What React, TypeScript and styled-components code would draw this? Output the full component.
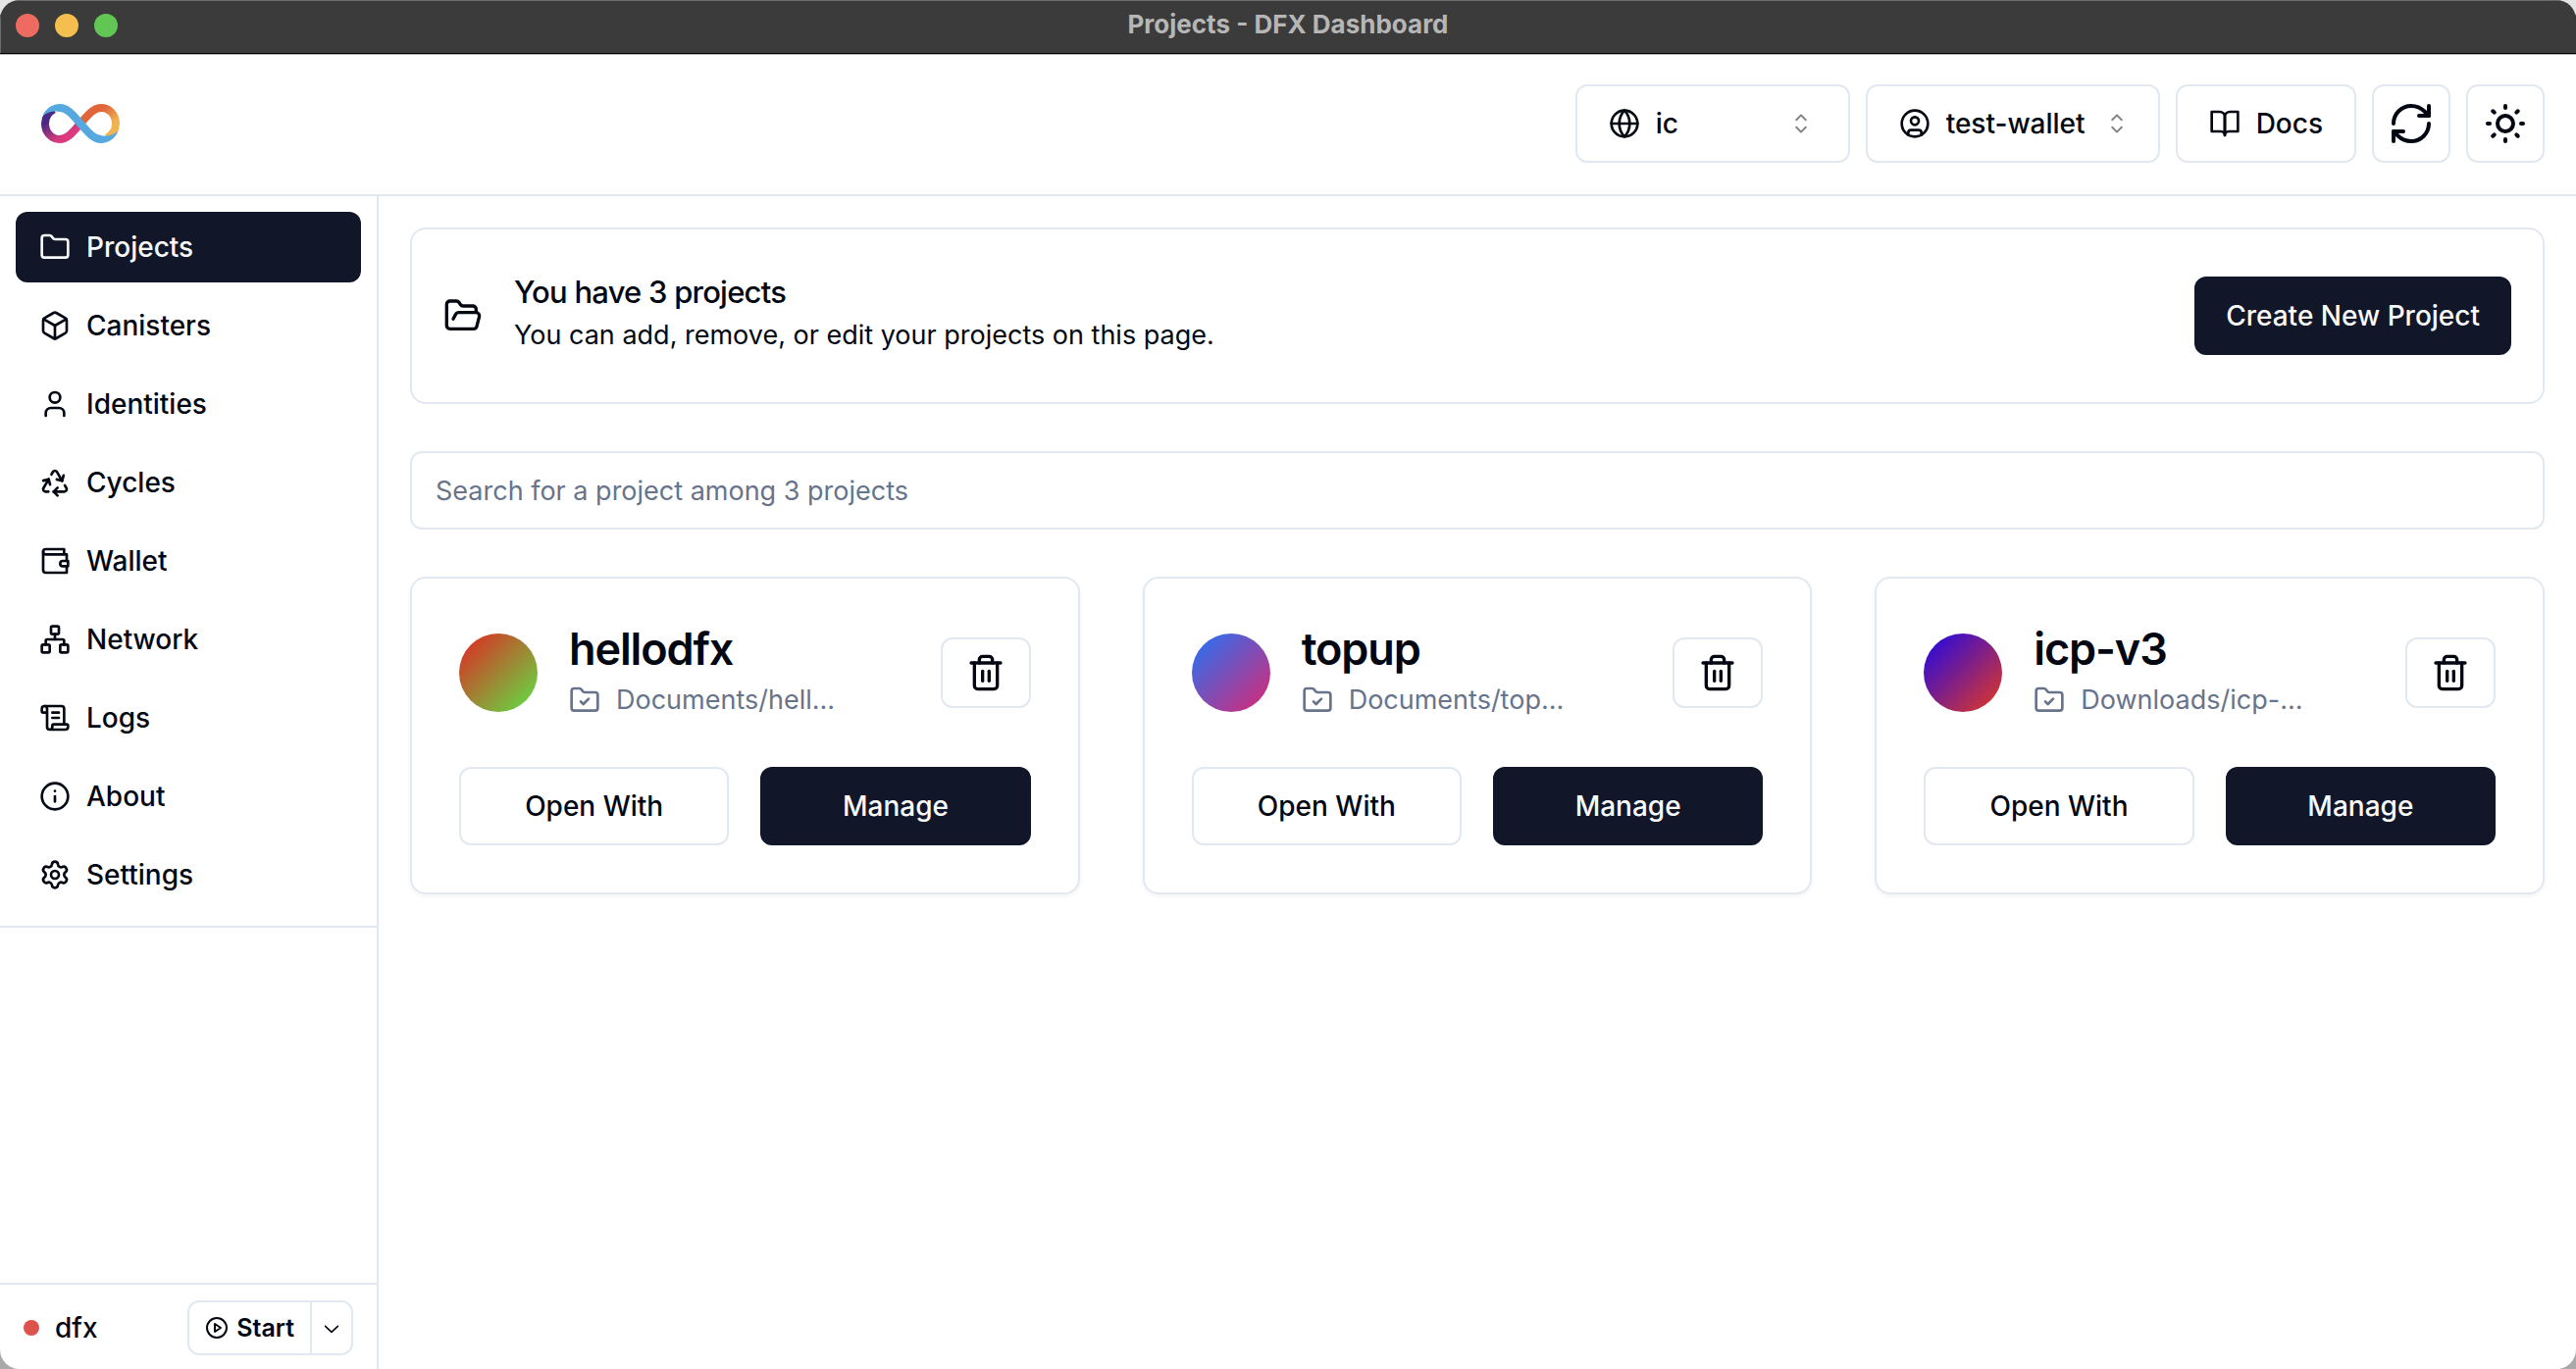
import React from "react";
import styled, { createGlobalStyle, css } from "styled-components";
import {
  Box, CircleUser, Folder, FolderCheck, FolderOpen, Globe, Info,
  Network, Recycle, RefreshCw, ScrollText, Settings, SunMedium, Trash2, User,
} from "lucide-react";

const color = {
  ink: "#030712",
  primary: "#111628",
  onPrimary: "#f8fafc",
  border: "#e2e8f0",
  muted: "#67748b",
  titleBar: "#3b3b3b",
};

const GlobalStyle = createGlobalStyle`
  *, *::before, *::after { box-sizing: border-box; }
  html, body { margin: 0; height: 100%; }
  body {
    background: linear-gradient(#e4e4e4 50%, #a9a9a9 50%);
    color: ${color.ink};
    font-family: Inter, "Liberation Sans", sans-serif;
    font-size: 27px;
    line-height: 40px;
  }
  #root { height: 100%; }
  button, input, select { font: inherit; color: inherit; margin: 0; }
  h1, h2, p, ul { margin: 0; padding: 0; }
  svg { display: block; flex: none; }
`;

const Window = styled.div`
  display: flex;
  flex-direction: column;
  min-height: 100%;
  background: #fff;
  border-radius: 20px;
  overflow: hidden;
`;

const TitleBar = styled.div`
  position: relative;
  z-index: 1;
  display: grid;
  grid-template-columns: 1fr auto 1fr;
  align-items: center;
  height: 54px;
  padding: 0 16px 2px;
  background: ${color.titleBar};
  box-shadow: 0 1px 0 #000, 0 2px 0 #b4b4b4, inset 1px 1px 0 #6c6c6c;
`;

const Lights = styled.div`
  display: flex;
  gap: 16px;
`;

const Light = styled.span<{ $color: string }>`
  width: 24px;
  height: 24px;
  border-radius: 50%;
  background: ${(p) => p.$color};
`;

const WindowTitle = styled.span`
  padding-bottom: 2px;
  color: #b6b6b6;
  font-size: 26px;
  font-weight: 700;
  line-height: 32px;
`;

const Header = styled.header`
  display: flex;
  align-items: center;
  justify-content: space-between;
  padding: 32px 32px 32px 42px;
  border-bottom: 2px solid ${color.border};
`;

const Tools = styled.div`
  display: flex;
  gap: 16px;
`;

const outlined = css`
  border: 2px solid ${color.border};
  border-radius: 12px;
  background: #fff;
`;

const labelText = css`
  font-size: 28px;
  font-weight: 500;
`;

const Picker = styled.label<{ $width: number }>`
  ${outlined}
  ${labelText}
  display: flex;
  align-items: center;
  gap: 16px;
  width: ${(p) => p.$width}px;
  height: 80px;
  padding: 0 32px;
`;

const PickerSelect = styled.select`
  flex: 1 0 auto;
  padding: 0;
  border: 0;
  background: transparent;
  appearance: none;
  outline: none;
`;

const Button = styled.button<{ $primary?: boolean }>`
  ${outlined}
  ${labelText}
  display: flex;
  align-items: center;
  justify-content: center;
  gap: 16px;
  height: 80px;
  padding: 0 30px;
  white-space: nowrap;
  ${(p) =>
    p.$primary &&
    css`
      border-color: ${color.primary};
      background: ${color.primary};
      color: ${color.onPrimary};
    `}
`;

const IconButton = styled(Button)`
  width: 80px;
  padding: 0;
`;

const TrashButton = styled(Button)`
  height: 72px;
  padding: 0 24px;
`;

const DocsLink = styled.a`
  ${outlined}
  ${labelText}
  display: flex;
  align-items: center;
  gap: 16px;
  height: 80px;
  padding: 0 32px;
  color: inherit;
  text-decoration: none;
`;

const Body = styled.div`
  display: flex;
  flex: 1;
`;

const Sidebar = styled.aside`
  display: flex;
  flex-direction: column;
  flex: none;
  width: 386px;
  border-right: 2px solid ${color.border};
`;

const Nav = styled.nav`
  display: flex;
  flex-direction: column;
  gap: 8px;
  padding: 16px;
  border-bottom: 2px solid ${color.border};
`;

const NavItem = styled.a<{ $active?: boolean }>`
  ${labelText}
  display: flex;
  align-items: center;
  gap: 16px;
  height: 72px;
  padding: 0 24px;
  border-radius: 12px;
  color: ${(p) => (p.$active ? color.onPrimary : "inherit")};
  background: ${(p) => (p.$active ? color.primary : "transparent")};
  text-decoration: none;
`;

const SidebarFooter = styled.footer`
  display: flex;
  align-items: center;
  justify-content: space-between;
  margin-top: auto;
  padding: 16px 24px 14px;
  border-top: 2px solid ${color.border};
`;

const Status = styled.div`
  ${labelText}
  display: flex;
  align-items: center;
  gap: 16px;
`;

const StatusDot = styled.span`
  width: 16px;
  height: 16px;
  border-radius: 50%;
  background: #dd524c;
`;

const SplitButton = styled.div`
  ${outlined}
  display: flex;
  height: 56px;
  overflow: hidden;
`;

const StartButton = styled.button`
  display: flex;
  align-items: center;
  gap: 8px;
  padding: 0 16px;
  border: 0;
  background: transparent;
  font-size: 25px;
  font-weight: 600;
`;

const StartMenuButton = styled.button`
  display: flex;
  align-items: center;
  justify-content: center;
  width: 42px;
  padding: 0;
  border: 0;
  border-left: 2px solid ${color.border};
  background: transparent;
`;

const Main = styled.main`
  display: flex;
  flex-direction: column;
  flex: 1;
  gap: 48px;
  min-width: 0;
  padding: 32px;
`;

const Banner = styled.section`
  display: flex;
  align-items: center;
  gap: 32px;
  padding: 44px 32px;
  border: 2px solid ${color.border};
  border-radius: 16px;
`;

const BannerText = styled.div`
  flex: 1;
`;

const BannerTitle = styled.h1`
  font-size: 31px;
  font-weight: 500;
  line-height: 40px;
  letter-spacing: -0.025em;
`;

const BannerNote = styled.p`
  line-height: 48px;
`;

const Search = styled.input`
  ${outlined}
  width: 100%;
  height: 80px;
  padding: 0 24px;
  outline: none;
  &::placeholder {
    color: ${color.muted};
    opacity: 1;
  }
`;

const Projects = styled.div`
  display: grid;
  grid-template-columns: repeat(3, minmax(0, 1fr));
  gap: 64px;
`;

const Card = styled.article`
  display: flex;
  flex-direction: column;
  gap: 48px;
  padding: 48px;
  border: 2px solid ${color.border};
  border-radius: 16px;
  box-shadow: 0 2px 4px rgba(0, 0, 0, 0.05);
`;

const CardHeader = styled.div`
  display: flex;
  align-items: center;
  gap: 32px;
`;

const Avatar = styled.span<{ $from: string; $to: string }>`
  flex: none;
  width: 80px;
  height: 80px;
  border-radius: 50%;
  background: linear-gradient(135deg, ${(p) => p.$from}, ${(p) => p.$to});
`;

const CardText = styled.div`
  display: flex;
  flex-direction: column;
  flex: 1;
  gap: 8px;
  min-width: 0;
`;

const CardTitle = styled.h2`
  font-size: 45px;
  font-weight: 600;
  line-height: 48px;
  letter-spacing: -0.025em;
`;

const CardPath = styled.p`
  display: flex;
  align-items: center;
  gap: 16px;
  color: ${color.muted};
  white-space: nowrap;
`;

const CardActions = styled.div`
  display: grid;
  grid-template-columns: 1fr 1fr;
  gap: 32px;
`;

const CaretSort = () => (
  <svg width="32" height="32" viewBox="0 0 15 15" fill="currentColor" opacity="0.5" aria-hidden="true">
    <path d="M4.93179 5.43179C4.75605 5.60753 4.75605 5.89245 4.93179 6.06819C5.10753 6.24392 5.39245 6.24392 5.56819 6.06819L7.49999 4.13638L9.43179 6.06819C9.60753 6.24392 9.89245 6.24392 10.0682 6.06819C10.2439 5.89245 10.2439 5.60753 10.0682 5.43179L7.81819 3.18179C7.73379 3.0974 7.61933 3.04999 7.49999 3.04999C7.38064 3.04999 7.26618 3.0974 7.18179 3.18179L4.93179 5.43179ZM10.0682 9.56819C10.2439 9.39245 10.2439 9.10753 10.0682 8.93179C9.89245 8.75606 9.60753 8.75606 9.43179 8.93179L7.49999 10.8636L5.56819 8.93179C5.39245 8.75606 5.10753 8.75606 4.93179 8.93179C4.75605 9.10753 4.75605 9.39245 4.93179 9.56819L7.18179 11.8182C7.35753 11.9939 7.64245 11.9939 7.81819 11.8182L10.0682 9.56819Z" />
  </svg>
);

const ChevronDown = () => (
  <svg width="24" height="24" viewBox="0 0 15 15" fill="currentColor" aria-hidden="true">
    <path d="M3.13523 6.15803C3.3241 5.95657 3.64052 5.94637 3.84197 6.13523L7.5 9.56464L11.158 6.13523C11.3595 5.94637 11.6759 5.95657 11.8648 6.15803C12.0536 6.35949 12.0434 6.67591 11.842 6.86477L7.84197 10.6148C7.64964 10.7951 7.35036 10.7951 7.15803 10.6148L3.15803 6.86477C2.95657 6.67591 2.94637 6.35949 3.13523 6.15803Z" />
  </svg>
);

const LineIcon = ({ size = 32, children }: { size?: number; children: React.ReactNode }) => (
  <svg
    width={size}
    height={size}
    viewBox="0 0 24 24"
    fill="none"
    stroke="currentColor"
    strokeWidth="2"
    strokeLinecap="round"
    strokeLinejoin="round"
    aria-hidden="true"
  >
    {children}
  </svg>
);

const WalletIcon = () => (
  <LineIcon>
    <path d="M21 12V7H5a2 2 0 0 1 0-4h14v4" />
    <path d="M3 5v14a2 2 0 0 0 2 2h16v-5" />
    <path d="M18 12a2 2 0 0 0 0 4h4v-4Z" />
  </LineIcon>
);

const BookIcon = () => (
  <LineIcon>
    <path d="M2 3h6a4 4 0 0 1 4 4v14a3 3 0 0 0-3-3H2z" />
    <path d="M22 3h-6a4 4 0 0 0-4 4v14a3 3 0 0 1 3-3h7z" />
  </LineIcon>
);

const PlayIcon = () => (
  <LineIcon size={24}>
    <circle cx="12" cy="12" r="10" />
    <polygon points="10 8 16 12 10 16 10 8" />
  </LineIcon>
);

/* The infinity mark: a blue diagonal ribbon over a purple-pink and an orange-yellow loop. */
const Logo = () => (
  <svg width="80" height="40" viewBox="0 0 80 40" fill="none" strokeWidth="8" role="img" aria-label="Internet Computer">
    <defs>
      <linearGradient id="loopLeft" x1="8" y1="10" x2="24" y2="36" gradientUnits="userSpaceOnUse">
        <stop offset="0.2" stopColor="#4a2a84" />
        <stop offset="0.9" stopColor="#dc3a7c" />
      </linearGradient>
      <linearGradient id="loopRight" x1="58" y1="4" x2="74" y2="22" gradientUnits="userSpaceOnUse">
        <stop offset="0.2" stopColor="#e0663a" />
        <stop offset="0.9" stopColor="#f0b352" />
      </linearGradient>
    </defs>
    <path d="M40 20C33 28 27 36 19 36C10.500 36 4 29 4 20C4 13.500 8 8 13 5.500" stroke="url(#loopLeft)" />
    <path d="M40 20C47 12 53 4 61 4C69.500 4 76 11 76 20C76 26.500 72 32 67 34.500" stroke="url(#loopRight)" />
    <path d="M19 4C27 4 33 12 40 20C47 28 53 36 61 36" stroke="#55a9de" />
    <path d="M1.500 12.500C4.500 5 11 0 19 0L19.500 8C13 6.500 6 8 1.500 12.500Z" fill="#55a9de" />
    <path d="M78.500 27.500C75.500 35 69 40 61 40L60.500 32C67 33.500 74 32 78.500 27.500Z" fill="#55a9de" />
  </svg>
);

const navItems = [
  { label: "Projects", icon: <Folder size={32} />, active: true },
  { label: "Canisters", icon: <Box size={32} /> },
  { label: "Identities", icon: <User size={32} /> },
  { label: "Cycles", icon: <Recycle size={32} /> },
  { label: "Wallet", icon: <WalletIcon /> },
  { label: "Network", icon: <Network size={32} /> },
  { label: "Logs", icon: <ScrollText size={32} /> },
  { label: "About", icon: <Info size={32} /> },
  { label: "Settings", icon: <Settings size={32} /> },
];

const projects = [
  { name: "hellodfx", path: "Documents/hell...", from: "#e42222", to: "#5be545" },
  { name: "topup", path: "Documents/top...", from: "#1f75fa", to: "#de2670" },
  { name: "icp-v3", path: "Downloads/icp-...", from: "#1c06ea", to: "#e63a1e" },
];

export default function App() {
  return (
    <>
      <GlobalStyle />
      <Window>
        <TitleBar>
          <Lights>
            <Light $color="#ed6b60" />
            <Light $color="#f5bf4f" />
            <Light $color="#62c655" />
          </Lights>
          <WindowTitle>Projects - DFX Dashboard</WindowTitle>
        </TitleBar>
        <Header>
          <Logo />
          <Tools>
            <Picker $width={280}>
              <Globe size={32} />
              <PickerSelect aria-label="Network">
                <option>ic</option>
              </PickerSelect>
              <CaretSort />
            </Picker>
            <Picker $width={300}>
              <CircleUser size={32} />
              <PickerSelect aria-label="Identity">
                <option>test-wallet</option>
              </PickerSelect>
              <CaretSort />
            </Picker>
            <DocsLink href="#docs">
              <BookIcon />
              Docs
            </DocsLink>
            <IconButton type="button" aria-label="Refresh">
              <RefreshCw size={48} />
            </IconButton>
            <IconButton type="button" aria-label="Toggle theme">
              <SunMedium size={48} />
            </IconButton>
          </Tools>
        </Header>
        <Body>
          <Sidebar>
            <Nav>
              {navItems.map((item) => (
                <NavItem key={item.label} href={"#" + item.label.toLowerCase()} $active={item.active}>
                  {item.icon}
                  {item.label}
                </NavItem>
              ))}
            </Nav>
            <SidebarFooter>
              <Status>
                <StatusDot />
                dfx
              </Status>
              <SplitButton>
                <StartButton type="button">
                  <PlayIcon />
                  Start
                </StartButton>
                <StartMenuButton type="button" aria-label="Start options">
                  <ChevronDown />
                </StartMenuButton>
              </SplitButton>
            </SidebarFooter>
          </Sidebar>
          <Main>
            <Banner>
              <FolderOpen size={40} />
              <BannerText>
                <BannerTitle>You have 3 projects</BannerTitle>
                <BannerNote>You can add, remove, or edit your projects on this page.</BannerNote>
              </BannerText>
              <Button type="button" $primary>Create New Project</Button>
            </Banner>
            <Search
              type="search"
              aria-label="Search projects"
              placeholder="Search for a project among 3 projects"
            />
            <Projects>
              {projects.map((project) => (
                <Card key={project.name}>
                  <CardHeader>
                    <Avatar $from={project.from} $to={project.to} />
                    <CardText>
                      <CardTitle>{project.name}</CardTitle>
                      <CardPath>
                        <FolderCheck size={32} />
                        {project.path}
                      </CardPath>
                    </CardText>
                    <TrashButton type="button" aria-label={"Delete " + project.name}>
                      <Trash2 size={40} />
                    </TrashButton>
                  </CardHeader>
                  <CardActions>
                    <Button type="button">Open With</Button>
                    <Button type="button" $primary>Manage</Button>
                  </CardActions>
                </Card>
              ))}
            </Projects>
          </Main>
        </Body>
      </Window>
    </>
  );
}
